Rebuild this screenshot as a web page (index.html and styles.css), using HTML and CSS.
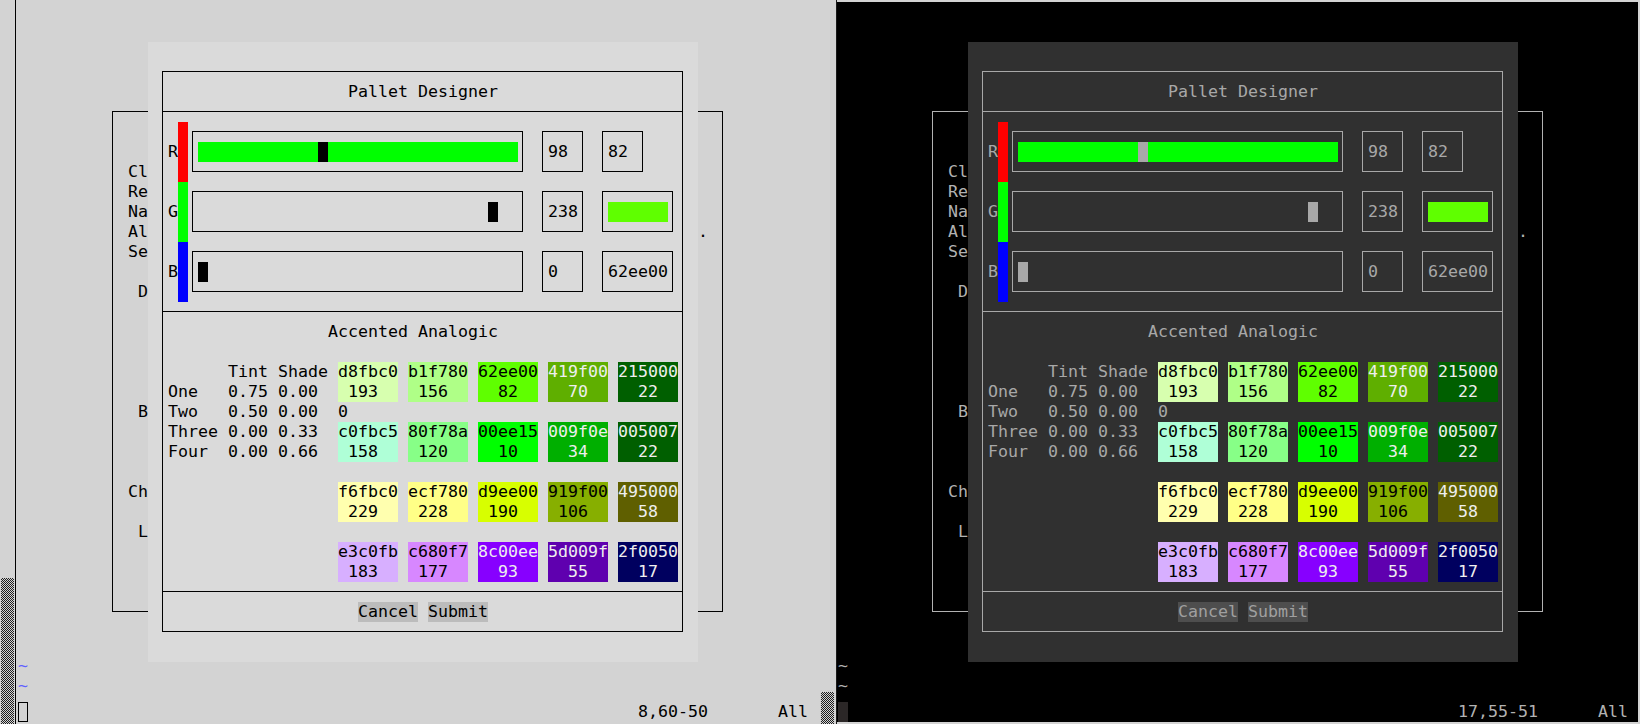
FILE: index.html
```html
<!DOCTYPE html>
<html>
<head>
<meta charset="utf-8">
<title>Pallet Designer</title>
<link rel="stylesheet" href="styles.css">
</head>
<body>
<div class="win light">
  <div class="scroll"><div class="thumb"></div></div>
  <div class="frame">
    <div class="screen">
      <div class="sp5"></div>
      <div class="bgframe">
        <div class="sp2"></div>
        <div class="pre"> Cl</div>
        <div class="pre"> Re</div>
        <div class="pre"> Na</div>
        <div class="pre"> Al<span class="dot">.</span></div>
        <div class="pre"> Se</div>
        <div class="sp1"></div>
        <div class="pre">  D</div>
        <div class="sp5"></div>
        <div class="pre">  B</div>
        <div class="sp3"></div>
        <div class="pre"> Ch</div>
        <div class="sp1"></div>
        <div class="pre">  L</div>
      </div>
      <div class="sp2"></div>
      <div class="tilde">~</div>
      <div class="tilde">~</div>
      <div class="status"><span class="cursor"></span><span class="ruler">8,60-50</span><span>All</span></div>

      <div class="popup">
        <div class="box">
          <div class="sec title">Pallet Designer</div>
          <div class="sec">
            <div class="srow">
              <div class="lbl">R</div><div class="bar bar-r"></div>
              <div class="fr slider"><div class="track on"><span class="knob" style="left:120px"></span></div></div>
              <div class="fr num">98</div>
              <div class="fr hex">82</div>
            </div>
            <div class="srow">
              <div class="lbl">G</div><div class="bar bar-g"></div>
              <div class="fr slider"><div class="track"><span class="knob" style="left:290px"></span></div></div>
              <div class="fr num">238</div>
              <div class="fr hex wide"><div class="chip"></div></div>
            </div>
            <div class="srow">
              <div class="lbl">B</div><div class="bar bar-b"></div>
              <div class="fr slider"><div class="track"><span class="knob" style="left:0px"></span></div></div>
              <div class="fr num">0</div>
              <div class="fr hex wide">62ee00</div>
            </div>
          </div>
          <div class="sec">
            <div class="subtitle">Accented Analogic</div>
            <div class="palwrap">
              <div class="tbl">
                <span></span><span>Tint</span><span>Shade</span>
                <span>One</span><span>0.75</span><span>0.00</span>
                <span>Two</span><span>0.50</span><span>0.00</span>
                <span>Three</span><span>0.00</span><span>0.33</span>
                <span>Four</span><span>0.00</span><span>0.66</span>
              </div>
              <div class="pal">
                <div class="prow">
                  <div class="sw k c-d7ffaf">d8fbc0<br> 193</div>
                  <div class="sw k c-afff87">b1f780<br> 156</div>
                  <div class="sw k c-5fff00">62ee00<br>  82</div>
                  <div class="sw w c-5faf00">419f00<br>  70</div>
                  <div class="sw w c-005f00">215000<br>  22</div>
                </div>
                <div class="zero">0</div>
                <div class="prow">
                  <div class="sw k c-afffd7">c0fbc5<br> 158</div>
                  <div class="sw k c-87ff87">80f78a<br> 120</div>
                  <div class="sw k c-00ff00">00ee15<br>  10</div>
                  <div class="sw w c-00af00">009f0e<br>  34</div>
                  <div class="sw w c-005f00">005007<br>  22</div>
                </div>
                <div class="prow sep">
                  <div class="sw k c-ffffaf">f6fbc0<br> 229</div>
                  <div class="sw k c-ffff87">ecf780<br> 228</div>
                  <div class="sw k c-d7ff00">d9ee00<br> 190</div>
                  <div class="sw k c-87af00">919f00<br> 106</div>
                  <div class="sw w c-5f5f00">495000<br>  58</div>
                </div>
                <div class="prow sep">
                  <div class="sw k c-d7afff">e3c0fb<br> 183</div>
                  <div class="sw k c-d787ff">c680f7<br> 177</div>
                  <div class="sw w c-8700ff">8c00ee<br>  93</div>
                  <div class="sw w c-5f00af">5d009f<br>  55</div>
                  <div class="sw w c-00005f">2f0050<br>  17</div>
                </div>
              </div>
            </div>
          </div>
          <div class="sec btns"><span class="btn">Cancel</span><span class="btn">Submit</span></div>
        </div>
      </div>
    </div>
  </div>
</div>

<div class="win dark">
  <div class="scroll"><div class="thumb"></div></div>
  <div class="frame">
    <div class="screen">
      <div class="sp5"></div>
      <div class="bgframe">
        <div class="sp2"></div>
        <div class="pre"> Cl</div>
        <div class="pre"> Re</div>
        <div class="pre"> Na</div>
        <div class="pre"> Al<span class="dot">.</span></div>
        <div class="pre"> Se</div>
        <div class="sp1"></div>
        <div class="pre">  D</div>
        <div class="sp5"></div>
        <div class="pre">  B</div>
        <div class="sp3"></div>
        <div class="pre"> Ch</div>
        <div class="sp1"></div>
        <div class="pre">  L</div>
      </div>
      <div class="sp2"></div>
      <div class="tilde">~</div>
      <div class="tilde">~</div>
      <div class="status"><span class="cursor"></span><span class="ruler">17,55-51</span><span>All</span></div>

      <div class="popup">
        <div class="box">
          <div class="sec title">Pallet Designer</div>
          <div class="sec">
            <div class="srow">
              <div class="lbl">R</div><div class="bar bar-r"></div>
              <div class="fr slider"><div class="track on"><span class="knob" style="left:120px"></span></div></div>
              <div class="fr num">98</div>
              <div class="fr hex">82</div>
            </div>
            <div class="srow">
              <div class="lbl">G</div><div class="bar bar-g"></div>
              <div class="fr slider"><div class="track"><span class="knob" style="left:290px"></span></div></div>
              <div class="fr num">238</div>
              <div class="fr hex wide"><div class="chip"></div></div>
            </div>
            <div class="srow">
              <div class="lbl">B</div><div class="bar bar-b"></div>
              <div class="fr slider"><div class="track"><span class="knob" style="left:0px"></span></div></div>
              <div class="fr num">0</div>
              <div class="fr hex wide">62ee00</div>
            </div>
          </div>
          <div class="sec">
            <div class="subtitle">Accented Analogic</div>
            <div class="palwrap">
              <div class="tbl">
                <span></span><span>Tint</span><span>Shade</span>
                <span>One</span><span>0.75</span><span>0.00</span>
                <span>Two</span><span>0.50</span><span>0.00</span>
                <span>Three</span><span>0.00</span><span>0.33</span>
                <span>Four</span><span>0.00</span><span>0.66</span>
              </div>
              <div class="pal">
                <div class="prow">
                  <div class="sw k c-d7ffaf">d8fbc0<br> 193</div>
                  <div class="sw k c-afff87">b1f780<br> 156</div>
                  <div class="sw k c-5fff00">62ee00<br>  82</div>
                  <div class="sw w c-5faf00">419f00<br>  70</div>
                  <div class="sw w c-005f00">215000<br>  22</div>
                </div>
                <div class="zero">0</div>
                <div class="prow">
                  <div class="sw k c-afffd7">c0fbc5<br> 158</div>
                  <div class="sw k c-87ff87">80f78a<br> 120</div>
                  <div class="sw k c-00ff00">00ee15<br>  10</div>
                  <div class="sw w c-00af00">009f0e<br>  34</div>
                  <div class="sw w c-005f00">005007<br>  22</div>
                </div>
                <div class="prow sep">
                  <div class="sw k c-ffffaf">f6fbc0<br> 229</div>
                  <div class="sw k c-ffff87">ecf780<br> 228</div>
                  <div class="sw k c-d7ff00">d9ee00<br> 190</div>
                  <div class="sw k c-87af00">919f00<br> 106</div>
                  <div class="sw w c-5f5f00">495000<br>  58</div>
                </div>
                <div class="prow sep">
                  <div class="sw k c-d7afff">e3c0fb<br> 183</div>
                  <div class="sw k c-d787ff">c680f7<br> 177</div>
                  <div class="sw w c-8700ff">8c00ee<br>  93</div>
                  <div class="sw w c-5f00af">5d009f<br>  55</div>
                  <div class="sw w c-00005f">2f0050<br>  17</div>
                </div>
              </div>
            </div>
          </div>
          <div class="sec btns"><span class="btn">Cancel</span><span class="btn">Submit</span></div>
        </div>
      </div>
    </div>
  </div>
</div>
</body>
</html>
```

FILE: styles.css
```css
html, body { margin: 0; padding: 0; }
body {
  display: flex;
  width: 1640px;
  height: 724px;
  overflow: hidden;
  background: #d3d3d3;
  font-family: "DejaVu Sans Mono", "Liberation Mono", monospace;
  font-size: 16.61px;
  line-height: 20px;
}

.light {
  --bg: #d3d3d3; --fg: #000; --tilde: #5f5fff; --pop: #dadada; --pfg: #000;
  --line: #000; --knob: #000; --btn: #bcbcbc; --btnfg: #000;
}
.dark {
  --bg: #000; --fg: #b2b2b2; --tilde: #b2b2b2; --pop: #303030; --pfg: #a8a8a8;
  --line: #a8a8a8; --knob: #a8a8a8; --btn: #4e4e4e; --btnfg: #a0a0a0;
}

.win { display: flex; width: 820px; height: 724px; flex: none; }

.scroll {
  flex: none;
  width: 15px;
  border-right: 1px solid #000;
  background: #d3d3d3;
  display: flex;
  flex-direction: column;
  justify-content: flex-end;
}
.dark .scroll { width: 16px; border-right-color: #1a1a1a; }
.thumb {
  margin-left: 1px;
  width: 13px;
  background: repeating-conic-gradient(#1e1e1e 0 25%, #d3d3d3 0 50%) 0 0 / 2px 2px;
}
.light .thumb { height: 146px; }
.dark .thumb { height: 32px; }

.frame {
  flex: none;
  border: 2px solid #d3d3d3;
  border-left: 0;
  padding-left: 2px;
  background: var(--bg);
}
.dark .frame { padding-left: 1px; }

.screen {
  position: relative;
  width: 800px;
  height: 720px;
  color: var(--fg);
}
.pre { white-space: pre; height: 20px; }
.sp1 { height: 20px; }
.sp2 { height: 40px; }
.sp3 { height: 60px; }
.sp5 { height: 100px; }

.bgframe {
  width: 600px;
  height: 480px;
  margin: 9px 0 10px 94px;
  border: 1px solid var(--fg);
  padding: 10px 4px 9px 5px;
}
.dot { margin-left: 550px; }

.tilde { height: 20px; line-height: 8px; color: var(--tilde); }

.status { display: flex; height: 20px; white-space: pre; }
.cursor { width: 10px; height: 20px; box-sizing: border-box; flex: none; }
.light .cursor { border: 1px solid #000; }
.dark .cursor { background: #2b2727; }
.ruler { margin-left: 610px; width: 140px; }

/* popup */
.popup {
  position: absolute;
  left: 130px;
  top: 40px;
  width: 550px;
  height: 620px;
  background: var(--pop);
  color: var(--pfg);
  z-index: 1;
}
.box { margin: 29px 15px 0 14px; border: 1px solid var(--line); }
.sec { padding: 10px 4px 9px 5px; }
.sec + .sec { border-top: 1px solid var(--line); }
.title { text-align: center; height: 20px; }

.srow { display: flex; height: 60px; }
.lbl { width: 10px; height: 20px; padding-top: 20px; flex: none; }
.bar { width: 10px; height: 60px; flex: none; }
.bar-r { background: #ff0000; }
.bar-g { background: #00ff00; }
.bar-b { background: #0000ff; }

.fr {
  flex: none;
  height: 20px;
  margin: 9px 5px 10px 4px;
  border: 1px solid var(--line);
  padding: 10px 4px 9px 5px;
}
.slider { width: 320px; }
.track { position: relative; width: 320px; height: 20px; }
.track.on { background: #00ff00; }
.knob { position: absolute; top: 0; width: 10px; height: 20px; background: var(--knob); }
.num { margin-left: 14px; width: 30px; }
.hex { margin-left: 14px; width: 30px; }
.hex.wide { width: 60px; }
.chip { width: 60px; height: 20px; background: #5fff00; }

.subtitle { padding-left: 160px; height: 20px; }
.palwrap { display: flex; margin-top: 20px; }
.tbl {
  display: grid;
  grid-template-columns: 60px 50px 60px;
  grid-auto-rows: 20px;
  align-content: start;
  width: 170px;
  flex: none;
}
.pal { width: 340px; }
.prow { display: flex; gap: 10px; }
.prow.sep { margin-top: 20px; }
.zero { height: 20px; }
.sw { width: 60px; height: 40px; white-space: pre; flex: none; }
.k { color: #000; }
.w { color: #eeeeee; }

.c-d7ffaf { background: #d7ffaf; }
.c-afff87 { background: #afff87; }
.c-5fff00 { background: #5fff00; }
.c-5faf00 { background: #5faf00; }
.c-005f00 { background: #005f00; }
.c-afffd7 { background: #afffd7; }
.c-87ff87 { background: #87ff87; }
.c-00ff00 { background: #00ff00; }
.c-00af00 { background: #00af00; }
.c-ffffaf { background: #ffffaf; }
.c-ffff87 { background: #ffff87; }
.c-d7ff00 { background: #d7ff00; }
.c-87af00 { background: #87af00; }
.c-5f5f00 { background: #5f5f00; }
.c-d7afff { background: #d7afff; }
.c-d787ff { background: #d787ff; }
.c-8700ff { background: #8700ff; }
.c-5f00af { background: #5f00af; }
.c-00005f { background: #00005f; }

.btns { display: flex; justify-content: center; gap: 10px; height: 20px; }
.btn { width: 60px; background: var(--btn); color: var(--btnfg); }
```
